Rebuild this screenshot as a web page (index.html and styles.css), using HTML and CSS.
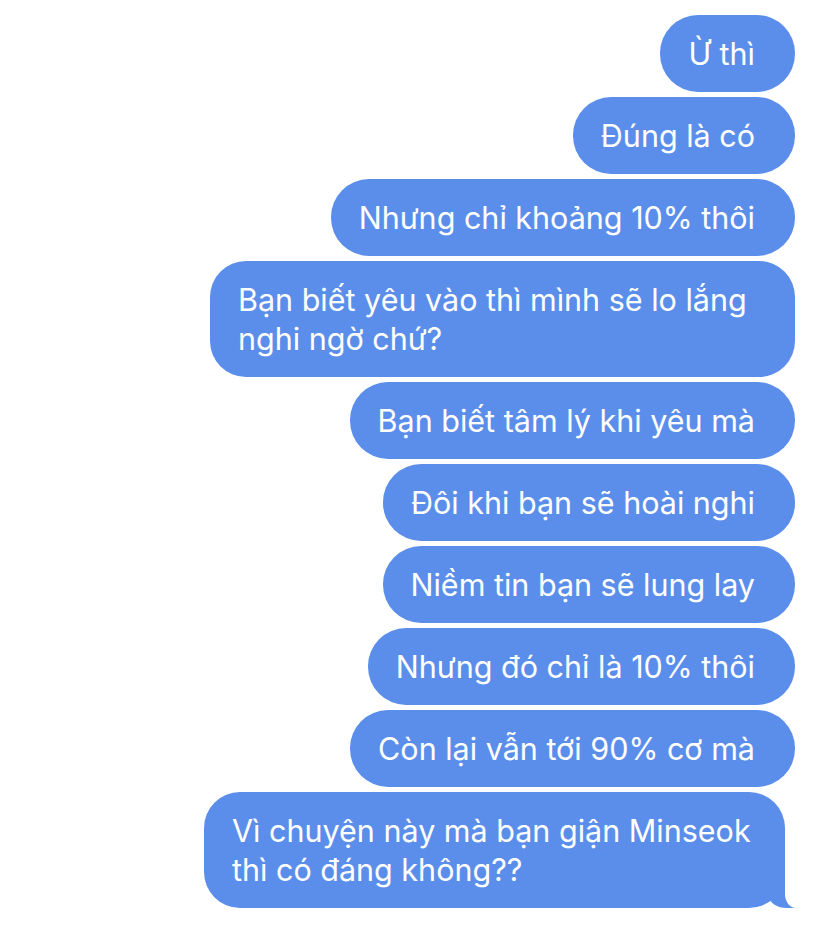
FILE: index.html
```html
<!DOCTYPE html>
<html lang="vi">
<head>
    <meta charset="UTF-8">
    <meta name="viewport" content="width=device-width, initial-scale=1.0">
    <title>Tin nhắn</title>
    <link rel="stylesheet" href="styles.css">
</head>
<body>
    <div class="thread">
        <div class="bubble">Ừ thì</div>
        <div class="bubble">Đúng là có</div>
        <div class="bubble">Nhưng chỉ khoảng 10% thôi</div>
        <div class="bubble wide">Bạn biết yêu vào thì mình sẽ lo lắng<br>nghi ngờ chứ?</div>
        <div class="bubble">Bạn biết tâm lý khi yêu mà</div>
        <div class="bubble">Đôi khi bạn sẽ hoài nghi</div>
        <div class="bubble">Niềm tin bạn sẽ lung lay</div>
        <div class="bubble">Nhưng đó chỉ là 10% thôi</div>
        <div class="bubble">Còn lại vẫn tới 90% cơ mà</div>
        <div class="bubble wide last">Vì chuyện này mà bạn giận Minseok<br>thì có đáng không??</div>
    </div>
</body>
</html>
```

FILE: styles.css
```css
body {
    margin: 0;
    padding: 0;
    background-color: #fff;
    font-family: 'Inter', 'Noto Sans', sans-serif;
}

.thread {
    display: flex;
    flex-direction: column;
    align-items: flex-end;
    gap: 5px;
    padding: 15px 33px 20px 0;
}

.bubble {
    position: relative;
    background-color: #5b8eea;
    color: #fff;
    font-size: 30.5px;
    line-height: 39px;
    padding: 19px 40px 19px 28px;
    border-radius: 38px;
    white-space: nowrap;
}

.wide {
    width: 517px;
    border-radius: 36px;
}

.last {
    margin-right: 10px;
    padding-right: 30px;
    width: 523px;
}

/* duoi bong chat */
.last::before {
    content: "";
    position: absolute;
    bottom: 0;
    right: -16px;
    width: 32px;
    height: 36px;
    background-color: #5b8eea;
    border-bottom-left-radius: 18px 12px;
}

.last::after {
    content: "";
    position: absolute;
    bottom: 0;
    right: -22px;
    width: 22px;
    height: 38px;
    background-color: #fff;
    border-bottom-left-radius: 11px 14px;
}
```
